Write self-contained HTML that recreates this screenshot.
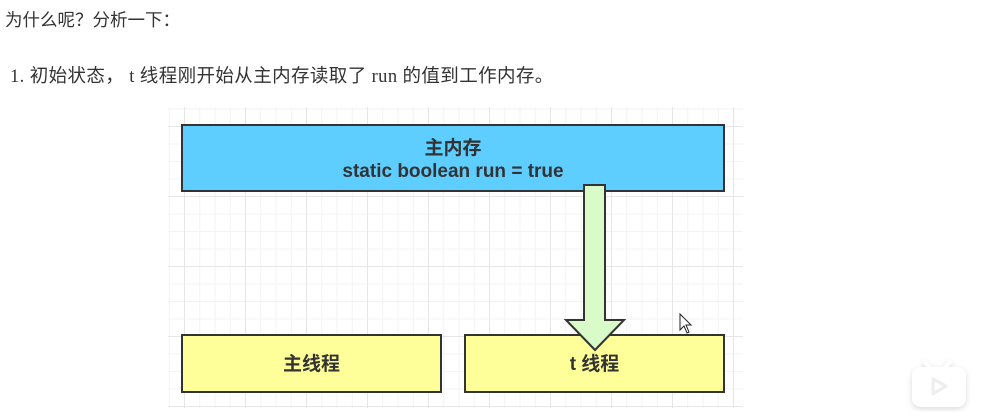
<!DOCTYPE html>
<html><head><meta charset="utf-8"><style>
body{margin:0;width:992px;height:418px;background:#fff;position:relative;overflow:hidden;font-family:"Liberation Serif","Noto Sans CJK SC",serif;color:#333}
.t{position:absolute;font-size:17.5px;white-space:nowrap}
.grid{position:absolute;left:168px;top:107px;width:575px;height:301px;
background-image:linear-gradient(#e6e6e6 1px,transparent 1px),linear-gradient(90deg,#e6e6e6 1px,transparent 1px),linear-gradient(#f3f3f3 1px,transparent 1px),linear-gradient(90deg,#f3f3f3 1px,transparent 1px);
background-size:61px 70px,61px 70px,15.25px 17.5px,15.25px 17.5px;background-position:16px 19px,16px 19px,16px 19px,16px 19px}
.box{position:absolute;box-sizing:border-box;border:2px solid #333;font-family:"Liberation Sans","Noto Sans CJK SC",sans-serif;font-weight:bold;font-size:19px;color:#333;text-align:center}
</style></head><body>
<div class="t" style="left:5px;top:7px">为什么呢？分析一下：</div>
<div class="t" style="left:10px;top:62px;font-size:18.5px;letter-spacing:0.4px">1. 初始状态， t 线程刚开始从主内存读取了 run 的值到工作内存。</div>
<div class="grid"></div>
<div class="box" style="left:181px;top:124px;width:544px;height:68px;background:#5ecdff;line-height:23px;padding-top:11px">主内存<br>static boolean run = true</div>
<div class="box" style="left:181px;top:334px;width:261px;height:59px;background:#ffff99;line-height:57px">主线程</div>
<div class="box" style="left:464px;top:334px;width:261px;height:59px;background:#ffff99;line-height:57px">t 线程</div>
<svg style="position:absolute;left:0;top:0" width="992" height="418">
<path d="M584 185 H605 V320 H624 L595 350 L566 320 H584 Z" fill="#d9fbc8" stroke="#333" stroke-width="2" stroke-linejoin="miter"/>
<path d="M680 314 V330 L684 326 L687 333 L689 332 L686 325 L691 325 Z" fill="#fff" stroke="#222" stroke-width="1"/>
<defs><filter id="s"><feDropShadow dx="0" dy="2" stdDeviation="3" flood-color="#000" flood-opacity="0.15"/></filter></defs>
<g filter="url(#s)">
<path d="M925 362 L931 369 M950 362 L944 369" stroke="#fff" stroke-width="4" stroke-linecap="round"/>
<rect x="912" y="367" width="54" height="40" rx="9" fill="#fff"/>
</g>
<path d="M933 379 L946 386 L933 394 Z" fill="none" stroke="#eee" stroke-width="3" stroke-linejoin="round"/>
</svg>
</body></html>
